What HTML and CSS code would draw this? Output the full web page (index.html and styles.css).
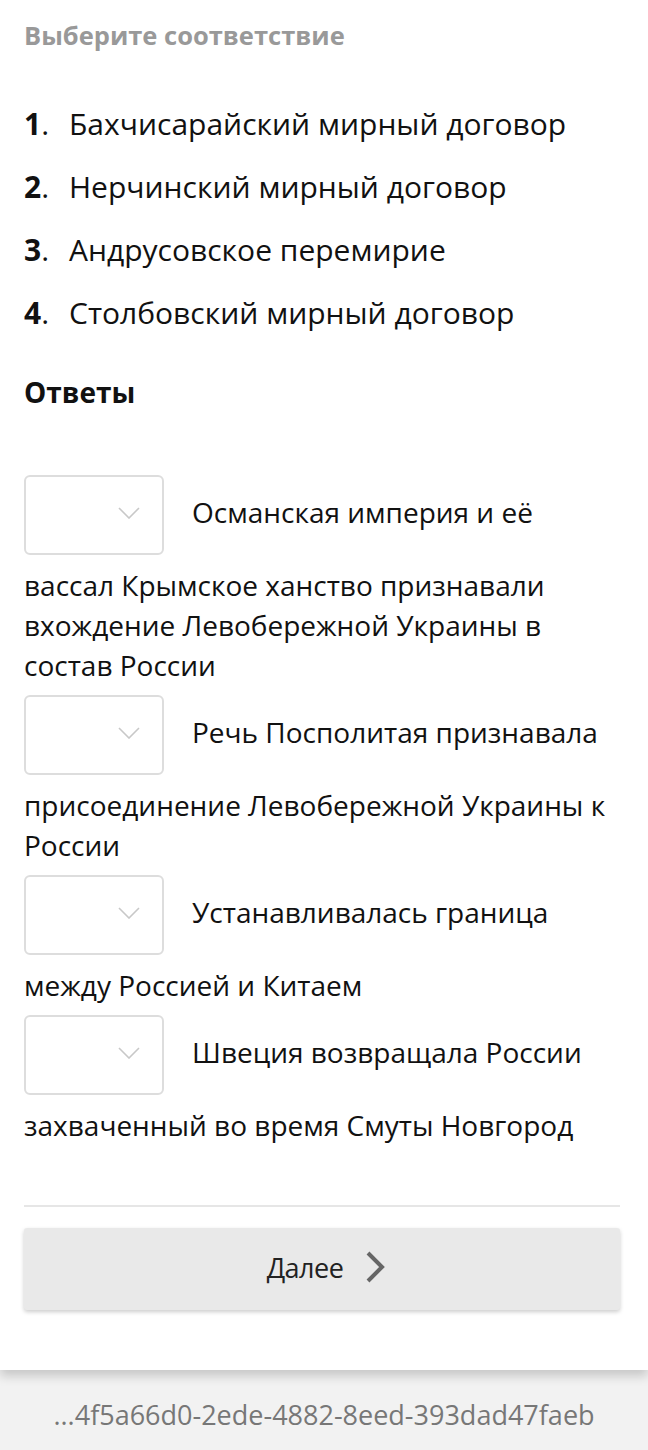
FILE: index.html
```html
<!DOCTYPE html>
<html lang="ru">
<head>
    <meta charset="UTF-8">
    <meta name="viewport" content="width=device-width, initial-scale=1.0">
    <title>Выберите соответствие</title>
    <link rel="stylesheet" href="styles.css">
</head>
<body>
    <div class="page">
        <div class="question-title">Выберите соответствие</div>
        <div class="items">
            <div class="item"><span class="item-num"><b>1</b>.</span>Бахчисарайский мирный договор</div>
            <div class="item"><span class="item-num"><b>2</b>.</span>Нерчинский мирный договор</div>
            <div class="item"><span class="item-num"><b>3</b>.</span>Андрусовское перемирие</div>
            <div class="item"><span class="item-num"><b>4</b>.</span>Столбовский мирный договор</div>
        </div>
        <div class="answers-title">Ответы</div>
        <div class="answers">
            <div class="answer"><span class="select"><svg class="select-arrow" width="22" height="12" viewBox="0 0 22 12"><path d="M1 1 L11 11 L21 1" fill="none" stroke="#c8c8c8" stroke-width="1.6"/></svg></span>Османская империя и её вассал Крымское ханство признавали вхождение Левобережной Украины в состав России</div>
            <div class="answer"><span class="select"><svg class="select-arrow" width="22" height="12" viewBox="0 0 22 12"><path d="M1 1 L11 11 L21 1" fill="none" stroke="#c8c8c8" stroke-width="1.6"/></svg></span>Речь Посполитая признавала присоединение Левобережной Украины к России</div>
            <div class="answer"><span class="select"><svg class="select-arrow" width="22" height="12" viewBox="0 0 22 12"><path d="M1 1 L11 11 L21 1" fill="none" stroke="#c8c8c8" stroke-width="1.6"/></svg></span>Устанавливалась граница между Россией и Китаем</div>
            <div class="answer"><span class="select"><svg class="select-arrow" width="22" height="12" viewBox="0 0 22 12"><path d="M1 1 L11 11 L21 1" fill="none" stroke="#c8c8c8" stroke-width="1.6"/></svg></span>Швеция возвращала России захваченный во время Смуты Новгород</div>
        </div>
        <div class="divider"></div>
        <div class="next-button">
            <span>Далее</span>
            <svg width="20" height="32" viewBox="0 0 20 32"><path d="M3 2 L17 16 L3 30" fill="none" stroke="#666" stroke-width="4"/></svg>
        </div>
    </div>
    <div class="footer">...4f5a66d0-2ede-4882-8eed-393dad47faeb</div>
</body>
</html>
```

FILE: styles.css
```css
body {
    margin: 0;
    padding: 0;
    background-color: #f2f2f2;
    font-family: "Open Sans", "Noto Sans", sans-serif;
    color: #111;
}
.page {
    padding: 18px 28px 60px 24px;
    background-color: #fff;
    position: relative;
    z-index: 1;
    box-shadow: 0 6px 10px rgba(0, 0, 0, 0.18);
}
.question-title {
    font-size: 25.5px;
    font-weight: bold;
    color: #999;
    line-height: 34px;
}
.items {
    margin-top: 52px;
}
.item {
    display: flex;
    font-size: 30px;
    line-height: 40px;
    margin-bottom: 23px;
}
.item-num {
    width: 45px;
    flex-shrink: 0;
}
.answers-title {
    font-size: 28px;
    font-weight: bold;
    line-height: 40px;
    margin-top: 39px;
}
.answers {
    margin-top: 53px;
}
.answer {
    font-size: 28px;
    line-height: 40px;
}
.select {
    display: inline-block;
    vertical-align: middle;
    width: 136px;
    height: 76px;
    border: 2px solid #ddd;
    border-radius: 6px;
    margin: 10px 28px 10px 0;
    position: relative;
}
.select-arrow {
    position: absolute;
    right: 22px;
    top: 30px;
}
.divider {
    height: 2px;
    background-color: #e6e6e6;
    margin-top: 60px;
}
.next-button {
    margin-top: 21px;
    height: 82px;
    padding: 0 0 4px 8px;
    box-sizing: border-box;
    background-color: #e9e9e9;
    border-radius: 3px;
    box-shadow: 0 2px 4px rgba(0, 0, 0, 0.2);
    display: flex;
    justify-content: center;
    align-items: center;
    gap: 22px;
    font-size: 27px;
    letter-spacing: -0.5px;
    color: #222;
}
.footer {
    height: 80px;
    padding-top: 8px;
    box-sizing: border-box;
    display: flex;
    justify-content: center;
    align-items: center;
    font-size: 27px;
    color: #777;
}
```
